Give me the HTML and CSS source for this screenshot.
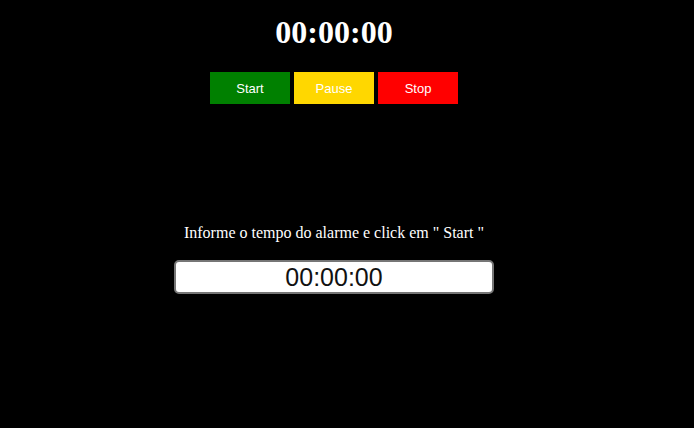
FILE: index.html
```html
<!DOCTYPE html>
<html lang="pt">
<head>
<meta charset="utf-8">
<title>Alarme</title>
<link rel="stylesheet" href="styles.css">
</head>
<body>
<main class="page">
  <h1 class="clock">00:00:00</h1>
  <div class="controls">
    <button class="btn btn-start">Start</button>
    <button class="btn btn-pause">Pause</button>
    <button class="btn btn-stop">Stop</button>
  </div>
  <p class="hint">Informe o tempo do alarme e click em " Start "</p>
  <input class="alarm" type="text" value="00:00:00">
</main>
</body>
</html>
```
FILE: styles.css
```css
html, body {
  margin: 0;
  padding: 0;
  background: #000;
}
.page {
  display: flex;
  flex-direction: column;
  align-items: center;
  width: 668px;
  font-family: "Liberation Serif", "Times New Roman", serif;
  color: #fff;
}
.clock {
  margin: 14px 0 0;
  font-size: 32px;
  font-weight: bold;
  line-height: 37px;
  height: 37px;
}
.controls {
  display: flex;
  gap: 4px;
  margin-top: 21px;
}
.btn {
  width: 80px;
  height: 32px;
  border: none;
  padding: 0;
  font-family: "Liberation Sans", Arial, sans-serif;
  font-size: 13px;
  color: #fff;
}
.btn-start { background: #008000; }
.btn-pause { background: #ffd700; }
.btn-stop { background: #ff0000; }
.hint {
  margin: 120px 0 0;
  font-size: 16px;
  line-height: 18px;
}
.alarm {
  margin-top: 18px;
  box-sizing: border-box;
  width: 320px;
  height: 34px;
  border: 2px solid #767676;
  border-radius: 5px;
  background: #fff;
  color: #111;
  text-align: center;
  font-family: "Liberation Sans", Arial, sans-serif;
  font-size: 25px;
  padding: 0;
  outline: none;
}
```
